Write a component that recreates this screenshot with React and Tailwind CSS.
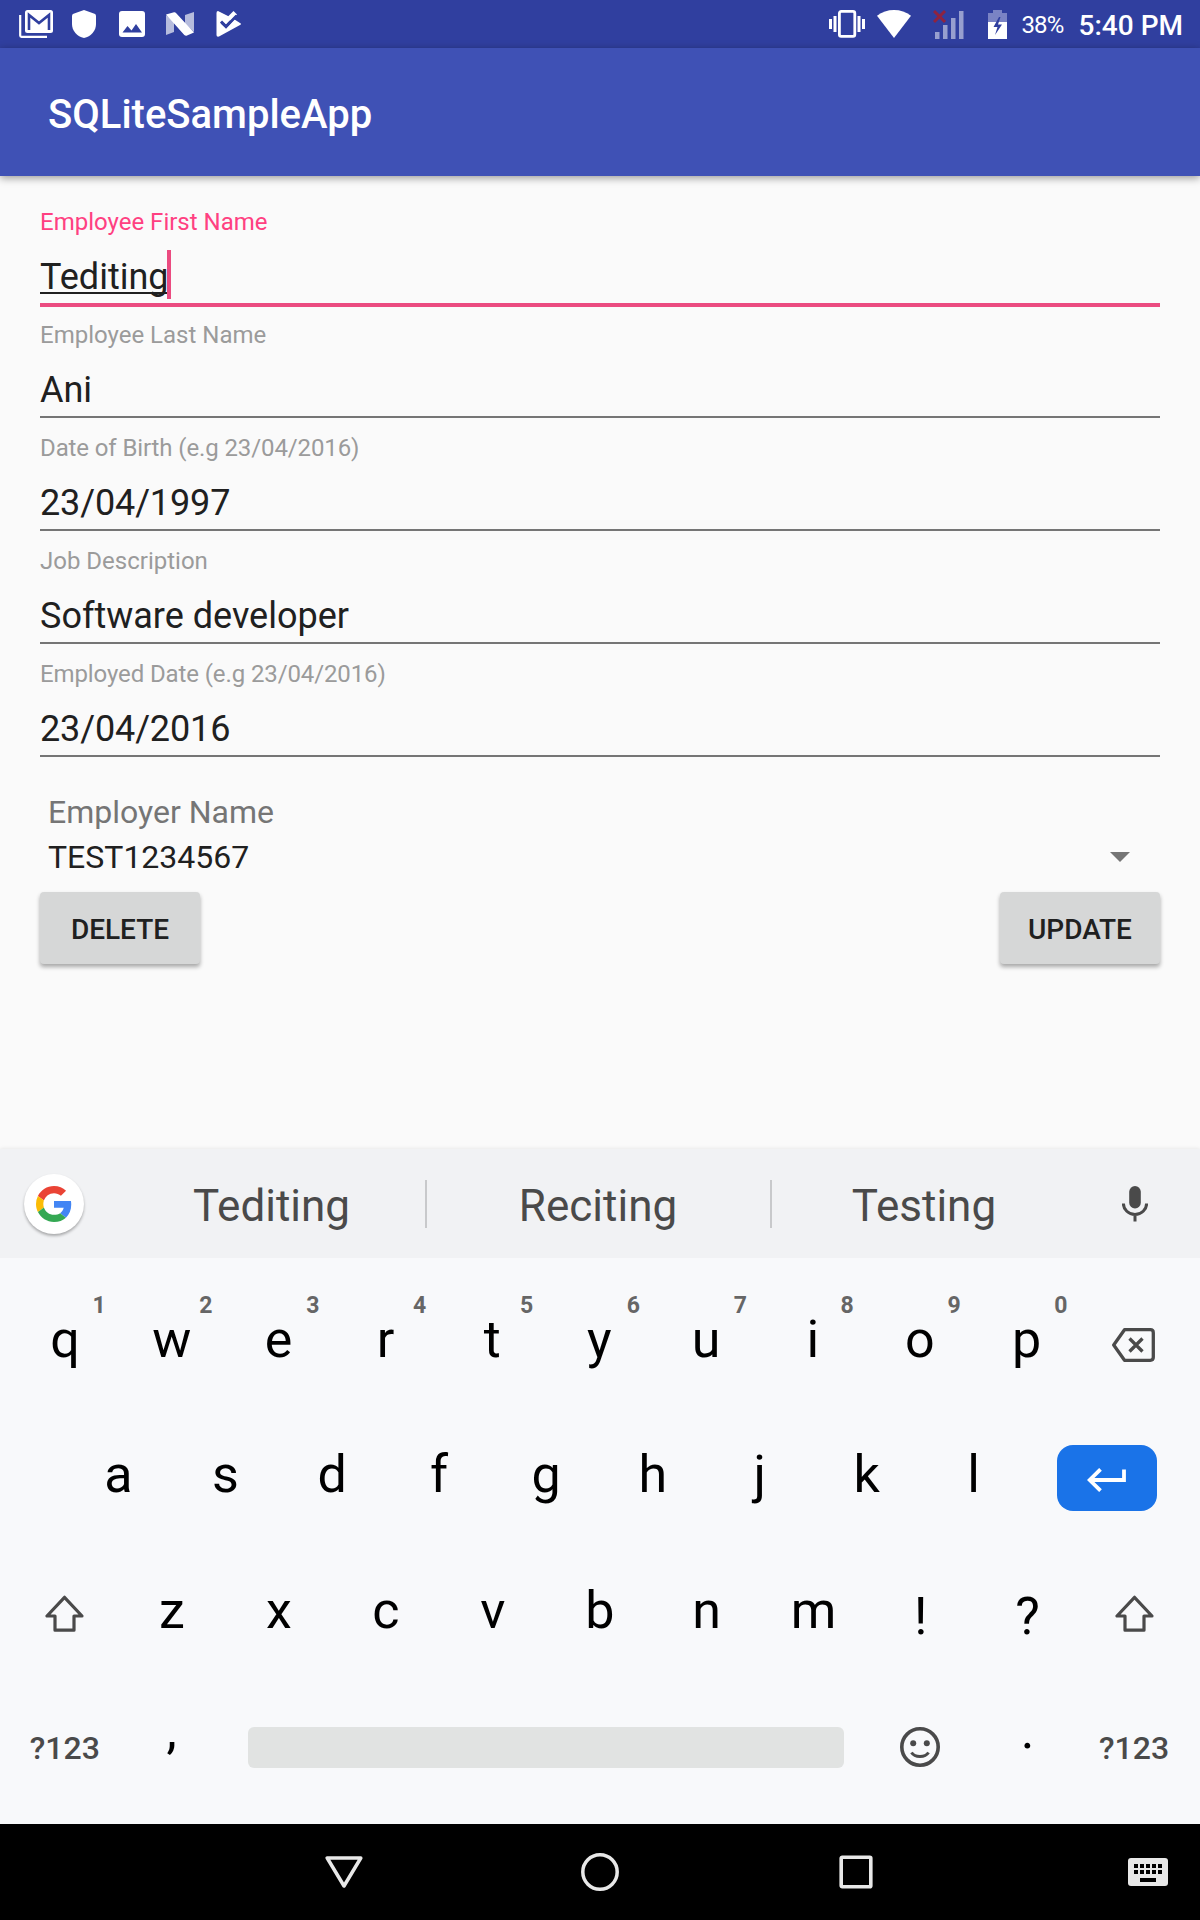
const fields = [
  { label: 'Employee First Name', value: 'Tediting', active: true },
  { label: 'Employee Last Name', value: 'Ani' },
  { label: 'Date of Birth (e.g 23/04/2016)', value: '23/04/1997', date: true },
  { label: 'Job Description', value: 'Software developer' },
  { label: 'Employed Date (e.g 23/04/2016)', value: '23/04/2016', date: true },
];

function StatusBar() {
  return (
    <div className="flex h-12 shrink-0 items-center justify-between bg-[#303f9f] text-white">
      <div className="flex items-center pl-[19px]">
        <svg className="h-7 w-[34px]" viewBox="0 0 34 28" fill="none">
          <rect x="6" y="0" width="28" height="23" rx="2.5" fill="#fff" />
          <path d="M10 20V5l10 8 10-8v15" stroke="#303f9f" strokeWidth="2.6" />
          <path d="M1.2 5v20.5a1.3 1.3 0 0 0 1.3 1.3H28" stroke="#fff" strokeWidth="2.2" />
        </svg>
        <svg className="ml-[19px] h-7 w-6" viewBox="0 0 24 28" fill="#fff">
          <path d="M12 0l10.500 3.800Q24 4.400 24 6v8c0 7-5 12.500-12 14C5 26.500 0 21 0 14V6Q0 4.400 1.500 3.800z" />
        </svg>
        <svg className="ml-[23px] h-[26px] w-[26px]" viewBox="0 0 26 26">
          <rect width="26" height="26" rx="3" fill="#fff" />
          <path d="M3.500 21.500l5-6.500 4 4.500 4.500-6.500 6 8.500z" fill="#303f9f" />
        </svg>
        <svg className="ml-[21px] h-6 w-7" viewBox="0 0 28 24" fill="#fff">
          <path d="M0 3l8 6v11l-8 3z" opacity=".65" />
          <path d="M19 3l9-3v20l-9-8z" opacity=".65" />
          <path d="M0 2.500L8 0.300 Q9.200 0 10 1L28 20.500L21 23.600Q19.500 24.200 18.300 23z" />
        </svg>
        <svg className="ml-[22px] h-[26px] w-[25px]" viewBox="0 0 25 26" fill="none">
          <path d="M2 0L17 7.500 24 12q2 1 0 2L3 25.600Q0.500 26.300 0.500 24V2Q.5 0 2 0z" fill="#fff" />
          <path d="M5 10.500l5 5L21 4" stroke="#303f9f" strokeWidth="3" />
          <path d="M12 5.500L17.500 0 21 3.500 14 10z" fill="#fff" />
          <path d="M5.500 11.500l4.500 4L20.500 4.500" stroke="#303f9f" strokeWidth="2.400" />
        </svg>
      </div>
      <div className="flex items-center pr-[17px]">
        <svg className="h-7 w-9" viewBox="0 0 36 28" fill="#fff">
          <rect x="10.400" y="1.400" width="15.400" height="25" rx="1.800" fill="none" stroke="#fff" strokeWidth="2.800" />
          <path d="M0 9h3v10H0zM4.500 6h3v16h-3zM28.500 6h3v16h-3zM33 9h3v10h-3z" />
        </svg>
        <svg className="ml-3 h-7 w-[34px]" viewBox="0 0 34 28" fill="#fff">
          <path d="M0 5.800Q7.500 0 17 0t17 5.800L17 28z" />
        </svg>
        <svg className="ml-[22px] h-[29px] w-[31px]" viewBox="0 0 31 29">
          <path d="M2 22h4.500v7H2zM10 15h4.500v14H10zM18 8h4.500v21H18zM26 1h4.500v28H26z" fill="#979fcf" />
          <path d="M1 1l11 11M12 1L1 12" stroke="#8e2340" strokeWidth="3" />
        </svg>
        <svg className="ml-6 h-[29px] w-[19px]" viewBox="0 0 19 29">
          <path d="M5 0h9v3h5v9H0V3h5z" fill="#7a83c4" />
          <path d="M0 12h19v17H0z" fill="#fff" />
          <path d="M11 7L5.500 17h4L7 25 14 14.500h-4L12.500 7z" fill="#303f9f" />
        </svg>
        <span className="ml-3.5 pt-0.5 text-[24px] leading-none tracking-[-0.8px]">38%</span>
        <span className="ml-[15px] pt-1 text-[28px] leading-none font-medium">5:40 PM</span>
      </div>
    </div>
  );
}

function Field({ label, value, active, date }) {
  return (
    <div className="flex h-[113px] flex-col">
      <div
        className={
          active
            ? 'h-7 text-[24px] leading-7 text-[#ff4081]'
            : date
              ? 'h-7 text-[24px] leading-7 tracking-[-0.11px] text-[#9b9b9b]'
              : 'h-7 text-[24px] leading-7 text-[#9b9b9b]'
        }
      >
        {label}
      </div>
      <div className="mt-3.5 flex h-[53px] items-start text-[36px] text-[#202020]">
        {active ? (
          <>
            <span className="mt-1.5 h-[38px] border-b-2 border-[#202020] leading-[42px]">{value}</span>
            <span className="-ml-0.5 h-[49px] w-1 bg-[#eb4b80]" />
          </>
        ) : (
          <span className={date ? 'mt-1.5 leading-[42px] tracking-[-0.13px]' : 'mt-1.5 leading-[42px]'}>{value}</span>
        )}
      </div>
      <div className={active ? 'h-1 shrink-0 bg-[#eb4b80]' : 'h-0.5 shrink-0 bg-[#757575]'} />
    </div>
  );
}

function Button({ children }) {
  return (
    <button className="h-[72px] w-40 rounded-[4px] bg-[#d6d7d7] pt-1 text-[28px] leading-none font-medium text-[#202020] shadow-[0_3px_4px_-0.5px_rgba(0,0,0,0.33)]">
      {children}
    </button>
  );
}

function GoogleG() {
  return (
    <svg className="h-9 w-9" viewBox="0 0 48 48">
      <path fill="#EA4335" d="M24 9.500c3.540 0 6.710 1.220 9.210 3.600l6.850-6.850C35.900 2.380 30.470 0 24 0 14.620 0 6.510 5.380 2.560 13.220l7.980 6.190C12.430 13.720 17.740 9.500 24 9.500z" />
      <path fill="#4285F4" d="M46.980 24.550c0-1.570-.15-3.090-.38-4.550H24v9.020h12.940c-.58 2.960-2.260 5.480-4.780 7.180l7.730 6c4.510-4.180 7.090-10.360 7.090-17.650z" />
      <path fill="#FBBC05" d="M10.530 28.590A14.500 14.500 0 0 1 9.770 24c0-1.600.27-3.140.76-4.590l-7.980-6.190A23.900 23.900 0 0 0 0 24c0 3.880.92 7.540 2.560 10.780z" />
      <path fill="#34A853" d="M24 48c6.480 0 11.930-2.130 15.890-5.810l-7.730-6c-2.150 1.450-4.920 2.300-8.160 2.300-6.260 0-11.570-4.220-13.470-9.910l-7.980 6.190C6.510 42.620 14.620 48 24 48z" />
    </svg>
  );
}

function Suggestions() {
  return (
    <div className="flex h-[109px] shrink-0 items-center bg-[#f1f2f4] text-[44px] leading-none text-[#4a4a4a] shadow-[0_0_4px_rgba(0,0,0,0.10)]">
      <div className="ml-6 flex h-[60px] w-[60px] items-center justify-center rounded-full bg-white shadow-[0_2px_3px_rgba(0,0,0,0.3)]">
        <GoogleG />
      </div>
      <div className="ml-8 flex w-[309px] justify-center pt-1 pl-0.5">Tediting</div>
      <div className="h-12 w-0.5 bg-[#c8c9cb]" />
      <div className="flex w-[343px] justify-center pt-1 pr-px">Reciting</div>
      <div className="h-12 w-0.5 bg-[#c8c9cb]" />
      <div className="flex w-[304px] justify-center pt-1">Testing</div>
      <div className="flex w-[118px] justify-center">
        <svg className="h-9 w-[26px]" viewBox="0 0 26 36" fill="none">
          <rect x="7.200" y="0" width="11.600" height="22.500" rx="5.800" fill="#4a4a4a" />
          <path d="M1.400 17.500a11.600 11 0 0 0 23.200 0M13 28.500V35.500" stroke="#4a4a4a" strokeWidth="3" />
        </svg>
      </div>
    </div>
  );
}

function Key({ children, hint }) {
  return (
    <div className="relative flex flex-1 justify-center">
      <span>{children}</span>
      {hint && (
        <span className="absolute top-[-18px] left-[81px] text-[23px] leading-7 font-bold text-[#666]">{hint}</span>
      )}
    </div>
  );
}

function Shift() {
  return (
    <div className="flex flex-1 justify-center pt-3.5">
      <svg className="h-[37px] w-[39px]" viewBox="0 0 39 37" fill="none" stroke="#4a4a4a" strokeWidth="3.200" strokeLinejoin="round">
        <path d="M19.500 2.300L2 21H10V35.200H29V21H37z" />
      </svg>
    </div>
  );
}

function Keyboard() {
  return (
    <div className="flex h-[566px] shrink-0 flex-col bg-[#f8f9fb] pt-[52px] pr-3 pl-[11.500px] text-[52px] leading-[60px] text-black">
      <div className="flex h-[135px] shrink-0">
        {'qwertyuiop'.split('').map((k, i) => (
          <Key key={k} hint={String((i + 1) % 10)}>{k}</Key>
        ))}
        <div className="flex flex-1 justify-center pt-[18px] pr-px">
          <svg className="h-[34px] w-[43px]" viewBox="0 0 43 34" fill="none" stroke="#4a4a4a" strokeWidth="3.300" strokeLinejoin="round">
            <path d="M12.500 1.700H38.300Q41.300 1.700 41.300 4.700V29.300Q41.300 32.300 38.300 32.300H12.500L1.700 17z" />
            <path d="M17.500 10.500l13 13M30.500 10.500l-13 13" />
          </svg>
        </div>
      </div>
      <div className="flex h-[136px] shrink-0 pl-[53.500px]">
        {'asdfghjkl'.split('').map((k) => (
          <div key={k} className="w-[106.900px] text-center">{k}</div>
        ))}
        <div className="flex flex-1 justify-center pr-px">
          <div className="flex h-[66px] w-[100px] items-center justify-center rounded-[16px] bg-[#1a73e8]">
            <svg className="mt-1 mr-px h-6 w-[39px]" viewBox="0 0 39 24" fill="none" stroke="#fff" strokeWidth="3.800">
              <path d="M37 1.500V12H3M13.500 1.300L2.700 12l10.800 10.700" />
            </svg>
          </div>
        </div>
      </div>
      <div className="flex h-[136px] shrink-0">
        <Shift />
        {'zxcvbnm'.split('').map((k) => (
          <Key key={k}>{k}</Key>
        ))}
        <div className="flex-1 pt-1.5 text-center">!</div>
        <div className="flex-1 pt-1.5 text-center">?</div>
        <Shift />
      </div>
      <div className="flex h-[60px] shrink-0 items-center">
        <div className="w-[106.500px] pt-px text-center text-[32px] font-medium text-[#4a4a4a]">?123</div>
        <div className="w-[107px] pb-[33px] text-center">,</div>
        <div className="mt-px ml-[23px] h-[41px] w-[596px] rounded-[6px] bg-[#e1e3e2]" />
        <svg className="ml-14 h-10 w-10" viewBox="0 0 40 40" fill="none" stroke="#4a4a4a">
          <circle cx="20" cy="20" r="18.200" strokeWidth="3.600" />
          <circle cx="13.200" cy="16.200" r="3" fill="#4a4a4a" stroke="none" />
          <circle cx="26.800" cy="16.200" r="3" fill="#4a4a4a" stroke="none" />
          <path d="M11.500 25.500Q14 29.500 20 29.500t8.500-4" strokeWidth="3" />
        </svg>
        <div className="ml-[34px] w-[107px] pb-[33px] text-center">.</div>
        <div className="flex-1 pt-px pr-px text-center text-[32px] font-medium text-[#4a4a4a]">?123</div>
      </div>
    </div>
  );
}

function NavBar() {
  return (
    <div className="flex h-24 shrink-0 items-center bg-black">
      <svg className="ml-[325px] h-[34px] w-[38px]" viewBox="0 0 38 34" fill="none" stroke="#e8e8e8" strokeWidth="3.500" strokeLinejoin="round">
        <path d="M2.200 3H35.800L19 31z" />
      </svg>
      <svg className="ml-[218px] h-[38px] w-[38px]" viewBox="0 0 38 38" fill="none">
        <circle cx="19" cy="19" r="17.200" stroke="#e8e8e8" strokeWidth="3.500" />
      </svg>
      <svg className="ml-[220px] h-[34px] w-[34px]" viewBox="0 0 34 34" fill="none">
        <rect x="2.200" y="2.200" width="29.600" height="29.600" rx="1" stroke="#e8e8e8" strokeWidth="3.600" />
      </svg>
      <svg className="ml-[255px] h-7 w-10" viewBox="0 0 40 28">
        <rect width="40" height="28" rx="3" fill="#e8e8e8" />
        <path d="M6 6h4v4H6zM12 6h4v4h-4zM18 6h4v4h-4zM24 6h4v4h-4zM30 6h4v4h-4zM6 12h4v4H6zM12 12h4v4h-4zM18 12h4v4h-4zM24 12h4v4h-4zM30 12h4v4h-4zM12 20h16v4H12z" fill="#000" />
      </svg>
    </div>
  );
}

export default function App() {
  return (
    <div className="flex h-[1920px] w-[1200px] flex-col overflow-hidden bg-[#fafafa] font-[Roboto,sans-serif]">
      <StatusBar />
      <header className="flex h-32 shrink-0 items-center bg-[#3f51b5] pt-1.5 pl-12 text-[40px] font-medium text-white shadow-[0_2px_8px_rgba(0,0,0,0.4)]">
        SQLiteSampleApp
      </header>
      <main className="flex h-[973px] shrink-0 flex-col px-10 pt-8">
        {fields.map((f) => (
          <Field key={f.label} {...f} />
        ))}
        <div className="mt-5 pl-2 text-[32px] leading-[38px] text-[#757575]">Employer Name</div>
        <div className="mt-[7px] flex items-center justify-between pr-[30px] pl-2 text-[32px] leading-[38px] text-[#202020]">
          <span>TEST1234567</span>
          <svg className="h-2.5 w-5" viewBox="0 0 20 10">
            <path d="M0 0h20L10 10z" fill="#757575" />
          </svg>
        </div>
        <div className="mt-4 flex justify-between">
          <Button>DELETE</Button>
          <Button>UPDATE</Button>
        </div>
      </main>
      <Suggestions />
      <Keyboard />
      <NavBar />
    </div>
  );
}
